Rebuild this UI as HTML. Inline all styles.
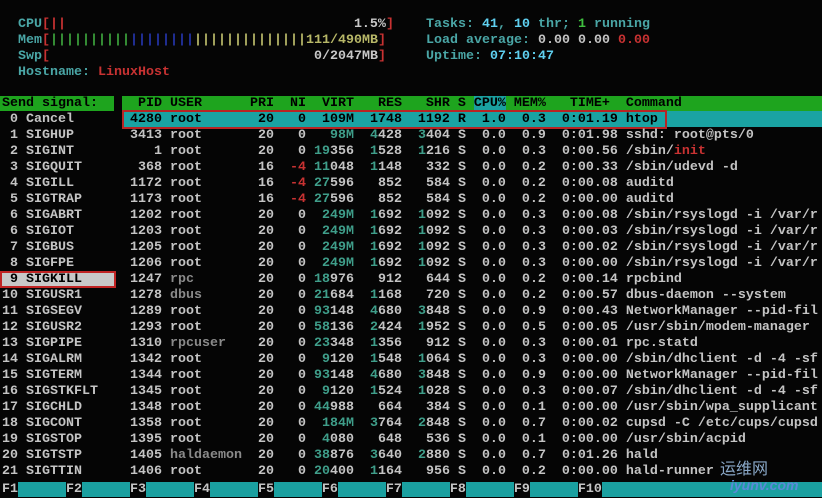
<!DOCTYPE html>
<html><head><meta charset="utf-8">
<style>
html,body{margin:0;padding:0;background:#050505;}
body{width:822px;height:498px;position:relative;overflow:hidden;font-family:"Liberation Mono",monospace;font-size:13.33px;font-weight:bold;color:#c4c4c4;}
pre{margin:0;font:inherit;white-space:pre;line-height:16px;}
.l{position:absolute;height:16px;line-height:16px;white-space:pre;margin-top:2px}
.t{color:#3f9e8a}.r{color:#c83232}.g{color:#8a8a8a}
.c{color:#4aa6a6}.bc{color:#5fd0f0}.bg{color:#3fbf3f}.y{color:#b8b868}.gr{color:#3ba03b}.bl{color:#2434a8}.w{color:#c8c8c8}
.row{position:absolute;left:0;width:822px;height:16px;overflow:hidden}
.sig{position:absolute;left:2px;top:1px}
.proc{position:absolute;left:122px;top:1px}
</style></head><body>
<div class="l" style="left:18px;top:15px"><span class="c">CPU</span><span class="r">[||</span>                                    <span class="w">1.5%</span><span class="r">]</span></div>
<div class="l" style="left:18px;top:31px"><span class="c">Mem</span><span class="r">[</span><span class="gr">||||||||||</span><span class="bl">||||||||</span><span class="y">||||||||||||||111/490MB</span><span class="r">]</span></div>
<div class="l" style="left:18px;top:47px"><span class="c">Swp</span><span class="r">[</span>                                 <span class="w">0/2047MB</span><span class="r">]</span></div>
<div class="l" style="left:18px;top:63px"><span class="c">Hostname: </span><span class="r">LinuxHost</span></div>
<div class="l" style="left:426px;top:15px"><span class="c">Tasks: </span><span class="bc">41</span><span class="c">, </span><span class="bc">10</span><span class="c"> thr; </span><span class="bg">1</span><span class="c"> running</span></div>
<div class="l" style="left:426px;top:31px"><span class="c">Load average: </span>0.00 0.00 <span class="r">0.00</span></div>
<div class="l" style="left:426px;top:47px"><span class="c">Uptime: </span><span class="bc">07:10:47</span></div>

<div style="position:absolute;left:0;top:96px;width:114px;height:15px;background:#1ea41e"></div>
<div style="position:absolute;left:122px;top:96px;width:700px;height:15px;background:#1ea41e"></div>
<div style="position:absolute;left:474px;top:96px;width:32px;height:15px;background:#1aa0a0"></div>
<div class="l" style="left:2px;top:94px;color:#000">Send signal:</div>
<div class="l" style="left:122px;top:94px;color:#000">  PID USER      PRI  NI  VIRT   RES   SHR S CPU% MEM%   TIME+  Command</div>

<div style="position:absolute;left:122px;top:111px;width:700px;height:16px;background:#1aa3a3"></div>
<div style="position:absolute;left:122px;top:110px;width:541px;height:15px;border:2px solid #b82424"></div>
<div style="position:absolute;left:0;top:271px;width:112px;height:13px;background:#c8c8c8;border:2px solid #c02424"></div>

<div class="row" style="top:111px"><pre class="sig"> 0 Cancel</pre><pre class="proc" style="color:#000"> 4280 root       20   0  109M  1748  1192 R  1.0  0.3  0:01.19 htop</pre></div>
<div class="row" style="top:127px"><pre class="sig"> 1 SIGHUP</pre><pre class="proc"> 3413 root       20   0   <span class="t">98M</span>  <span class="t">4</span>428  <span class="t">3</span>404 S  0.0  0.9  0:01.98 sshd: root@pts/0</pre></div>
<div class="row" style="top:143px"><pre class="sig"> 2 SIGINT</pre><pre class="proc">    1 root       20   0 <span class="t">19</span>356  <span class="t">1</span>528  <span class="t">1</span>216 S  0.0  0.3  0:00.56 /sbin/<span class="r">init</span></pre></div>
<div class="row" style="top:159px"><pre class="sig"> 3 SIGQUIT</pre><pre class="proc">  368 root       16  <span class="r">-4</span> <span class="t">11</span>048  <span class="t">1</span>148   332 S  0.0  0.2  0:00.33 /sbin/udevd -d</pre></div>
<div class="row" style="top:175px"><pre class="sig"> 4 SIGILL</pre><pre class="proc"> 1172 root       16  <span class="r">-4</span> <span class="t">27</span>596   852   584 S  0.0  0.2  0:00.08 auditd</pre></div>
<div class="row" style="top:191px"><pre class="sig"> 5 SIGTRAP</pre><pre class="proc"> 1173 root       16  <span class="r">-4</span> <span class="t">27</span>596   852   584 S  0.0  0.2  0:00.00 auditd</pre></div>
<div class="row" style="top:207px"><pre class="sig"> 6 SIGABRT</pre><pre class="proc"> 1202 root       20   0  <span class="t">249M</span>  <span class="t">1</span>692  <span class="t">1</span>092 S  0.0  0.3  0:00.08 /sbin/rsyslogd -i /var/r</pre></div>
<div class="row" style="top:223px"><pre class="sig"> 6 SIGIOT</pre><pre class="proc"> 1203 root       20   0  <span class="t">249M</span>  <span class="t">1</span>692  <span class="t">1</span>092 S  0.0  0.3  0:00.03 /sbin/rsyslogd -i /var/r</pre></div>
<div class="row" style="top:239px"><pre class="sig"> 7 SIGBUS</pre><pre class="proc"> 1205 root       20   0  <span class="t">249M</span>  <span class="t">1</span>692  <span class="t">1</span>092 S  0.0  0.3  0:00.02 /sbin/rsyslogd -i /var/r</pre></div>
<div class="row" style="top:255px"><pre class="sig"> 8 SIGFPE</pre><pre class="proc"> 1206 root       20   0  <span class="t">249M</span>  <span class="t">1</span>692  <span class="t">1</span>092 S  0.0  0.3  0:00.00 /sbin/rsyslogd -i /var/r</pre></div>
<div class="row" style="top:271px"><pre class="sig" style="color:#000"> 9 SIGKILL</pre><pre class="proc"> 1247 <span class="g">rpc</span>        20   0 <span class="t">18</span>976   912   644 S  0.0  0.2  0:00.14 rpcbind</pre></div>
<div class="row" style="top:287px"><pre class="sig">10 SIGUSR1</pre><pre class="proc"> 1278 <span class="g">dbus</span>       20   0 <span class="t">21</span>684  <span class="t">1</span>168   720 S  0.0  0.2  0:00.57 dbus-daemon --system</pre></div>
<div class="row" style="top:303px"><pre class="sig">11 SIGSEGV</pre><pre class="proc"> 1289 root       20   0 <span class="t">93</span>148  <span class="t">4</span>680  <span class="t">3</span>848 S  0.0  0.9  0:00.43 NetworkManager --pid-fil</pre></div>
<div class="row" style="top:319px"><pre class="sig">12 SIGUSR2</pre><pre class="proc"> 1293 root       20   0 <span class="t">58</span>136  <span class="t">2</span>424  <span class="t">1</span>952 S  0.0  0.5  0:00.05 /usr/sbin/modem-manager</pre></div>
<div class="row" style="top:335px"><pre class="sig">13 SIGPIPE</pre><pre class="proc"> 1310 <span class="g">rpcuser</span>    20   0 <span class="t">23</span>348  <span class="t">1</span>356   912 S  0.0  0.3  0:00.01 rpc.statd</pre></div>
<div class="row" style="top:351px"><pre class="sig">14 SIGALRM</pre><pre class="proc"> 1342 root       20   0  <span class="t">9</span>120  <span class="t">1</span>548  <span class="t">1</span>064 S  0.0  0.3  0:00.00 /sbin/dhclient -d -4 -sf</pre></div>
<div class="row" style="top:367px"><pre class="sig">15 SIGTERM</pre><pre class="proc"> 1344 root       20   0 <span class="t">93</span>148  <span class="t">4</span>680  <span class="t">3</span>848 S  0.0  0.9  0:00.00 NetworkManager --pid-fil</pre></div>
<div class="row" style="top:383px"><pre class="sig">16 SIGSTKFLT</pre><pre class="proc"> 1345 root       20   0  <span class="t">9</span>120  <span class="t">1</span>524  <span class="t">1</span>028 S  0.0  0.3  0:00.07 /sbin/dhclient -d -4 -sf</pre></div>
<div class="row" style="top:399px"><pre class="sig">17 SIGCHLD</pre><pre class="proc"> 1348 root       20   0 <span class="t">44</span>988   664   384 S  0.0  0.1  0:00.00 /usr/sbin/wpa_supplicant</pre></div>
<div class="row" style="top:415px"><pre class="sig">18 SIGCONT</pre><pre class="proc"> 1358 root       20   0  <span class="t">184M</span>  <span class="t">3</span>764  <span class="t">2</span>848 S  0.0  0.7  0:00.02 cupsd -C /etc/cups/cupsd</pre></div>
<div class="row" style="top:431px"><pre class="sig">19 SIGSTOP</pre><pre class="proc"> 1395 root       20   0  <span class="t">4</span>080   648   536 S  0.0  0.1  0:00.00 /usr/sbin/acpid</pre></div>
<div class="row" style="top:447px"><pre class="sig">20 SIGTSTP</pre><pre class="proc"> 1405 <span class="g">haldaemon</span>  20   0 <span class="t">38</span>876  <span class="t">3</span>640  <span class="t">2</span>880 S  0.0  0.7  0:01.26 hald</pre></div>
<div class="row" style="top:463px"><pre class="sig">21 SIGTTIN</pre><pre class="proc"> 1406 root       20   0 <span class="t">20</span>400  <span class="t">1</span>164   956 S  0.0  0.2  0:00.00 hald-runner</pre></div>

<div style="position:absolute;left:0;top:481px;width:822px;height:17px;background:#050505">
<div style="position:absolute;left:18px;top:1px;width:48px;height:15px;background:#1aa0a0"></div>
<div style="position:absolute;left:82px;top:1px;width:48px;height:15px;background:#1aa0a0"></div>
<div style="position:absolute;left:146px;top:1px;width:48px;height:15px;background:#1aa0a0"></div>
<div style="position:absolute;left:210px;top:1px;width:48px;height:15px;background:#1aa0a0"></div>
<div style="position:absolute;left:274px;top:1px;width:48px;height:15px;background:#1aa0a0"></div>
<div style="position:absolute;left:338px;top:1px;width:48px;height:15px;background:#1aa0a0"></div>
<div style="position:absolute;left:402px;top:1px;width:48px;height:15px;background:#1aa0a0"></div>
<div style="position:absolute;left:466px;top:1px;width:48px;height:15px;background:#1aa0a0"></div>
<div style="position:absolute;left:530px;top:1px;width:48px;height:15px;background:#1aa0a0"></div>
<div style="position:absolute;left:602px;top:1px;width:220px;height:15px;background:#1aa0a0"></div>
<pre class="l" style="left:2px;top:-1px">F1      F2      F3      F4      F5      F6      F7      F8      F9      F10</pre>
</div>
<div style="position:absolute;left:720px;top:455px;font-family:'Liberation Sans','Noto Sans CJK SC',sans-serif;font-size:16px;color:#8aa8c8;font-weight:normal">运维网</div>
<div style="position:absolute;left:730px;top:477px;font-family:'Liberation Sans',sans-serif;font-size:14px;color:#5a8ad8;font-style:italic">iyunv.com</div>
</body></html>
